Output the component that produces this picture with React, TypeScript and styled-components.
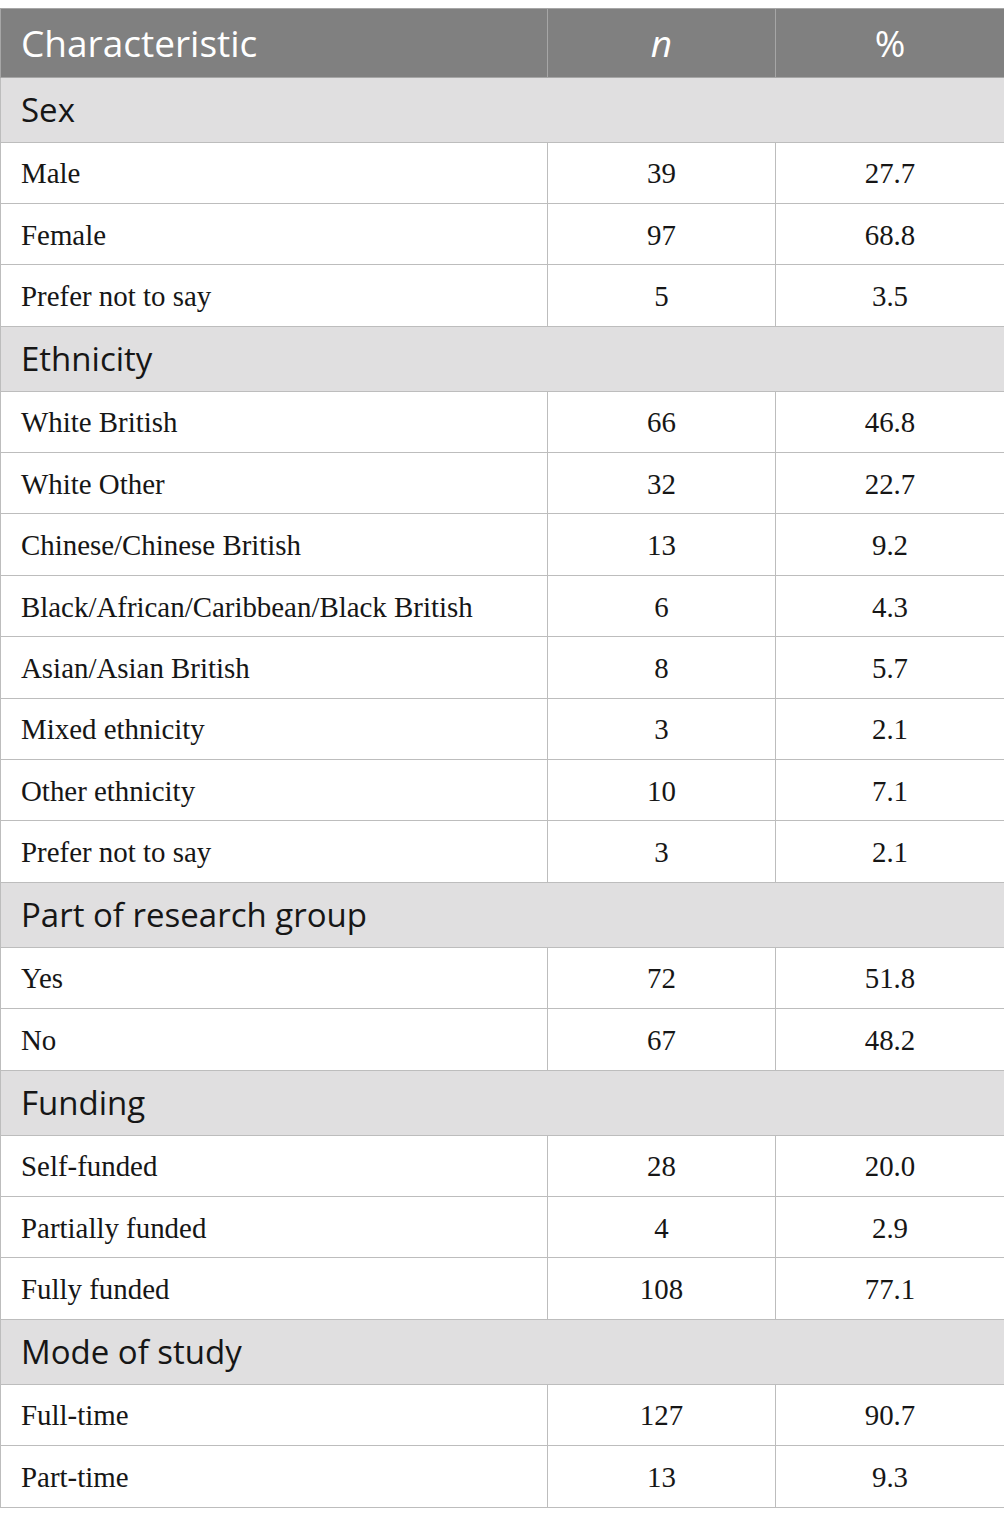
import styled, { createGlobalStyle } from "styled-components";

const GlobalStyle = createGlobalStyle`
  body {
    margin: 8px 0 0 0;
    background: #ffffff;
  }
`;

const Table = styled.table`
  border-collapse: collapse;
  width: 1004px;
  table-layout: fixed;
  color: #161616;
`;

const HeadCell = styled.th<{ $center?: boolean; $italic?: boolean }>`
  background-color: #808080;
  color: #ffffff;
  font-family: "Open Sans", sans-serif;
  font-weight: 400;
  font-size: 37px;
  line-height: 40px;
  font-style: ${({ $italic }) => ($italic ? "italic" : "normal")};
  text-align: ${({ $center }) => ($center ? "center" : "left")};
  height: 67.5px;
  padding: 0 20px;
  border: 1px solid #a6a6a6;
`;

const SectionCell = styled.td`
  background-color: #e0dfe0;
  font-family: "Open Sans", sans-serif;
  font-size: 33px;
  line-height: 36px;
  height: 64px;
  padding: 0 20px;
  border: 1px solid #bdbdbd;
`;

const DataCell = styled.td<{ $center?: boolean }>`
  font-family: "Liberation Serif", serif;
  font-size: 28.9px;
  line-height: 32px;
  text-align: ${({ $center }) => ($center ? "center" : "left")};
  height: 59.4px;
  padding: 1px 20px 0;
  border: 1px solid #bdbdbd;
`;

const sections: { title: string; rows: [string, string, string][] }[] = [
  {
    title: "Sex",
    rows: [
      ["Male", "39", "27.7"],
      ["Female", "97", "68.8"],
      ["Prefer not to say", "5", "3.5"],
    ],
  },
  {
    title: "Ethnicity",
    rows: [
      ["White British", "66", "46.8"],
      ["White Other", "32", "22.7"],
      ["Chinese/Chinese British", "13", "9.2"],
      ["Black/African/Caribbean/Black British", "6", "4.3"],
      ["Asian/Asian British", "8", "5.7"],
      ["Mixed ethnicity", "3", "2.1"],
      ["Other ethnicity", "10", "7.1"],
      ["Prefer not to say", "3", "2.1"],
    ],
  },
  {
    title: "Part of research group",
    rows: [
      ["Yes", "72", "51.8"],
      ["No", "67", "48.2"],
    ],
  },
  {
    title: "Funding",
    rows: [
      ["Self-funded", "28", "20.0"],
      ["Partially funded", "4", "2.9"],
      ["Fully funded", "108", "77.1"],
    ],
  },
  {
    title: "Mode of study",
    rows: [
      ["Full-time", "127", "90.7"],
      ["Part-time", "13", "9.3"],
    ],
  },
];

export default function App() {
  return (
    <>
      <GlobalStyle />
      <Table>
        <colgroup>
          <col style={{ width: 547 }} />
          <col style={{ width: 228 }} />
          <col style={{ width: 229 }} />
        </colgroup>
        <thead>
          <tr>
            <HeadCell>Characteristic</HeadCell>
            <HeadCell $center $italic>
              n
            </HeadCell>
            <HeadCell $center>%</HeadCell>
          </tr>
        </thead>
        <tbody>
          {sections.map((section) => (
            <SectionRows key={section.title} {...section} />
          ))}
        </tbody>
      </Table>
    </>
  );
}

function SectionRows({
  title,
  rows,
}: {
  title: string;
  rows: [string, string, string][];
}) {
  return (
    <>
      <tr>
        <SectionCell colSpan={3}>{title}</SectionCell>
      </tr>
      {rows.map(([label, n, pct], i) => (
        <tr key={i}>
          <DataCell>{label}</DataCell>
          <DataCell $center>{n}</DataCell>
          <DataCell $center>{pct}</DataCell>
        </tr>
      ))}
    </>
  );
}
